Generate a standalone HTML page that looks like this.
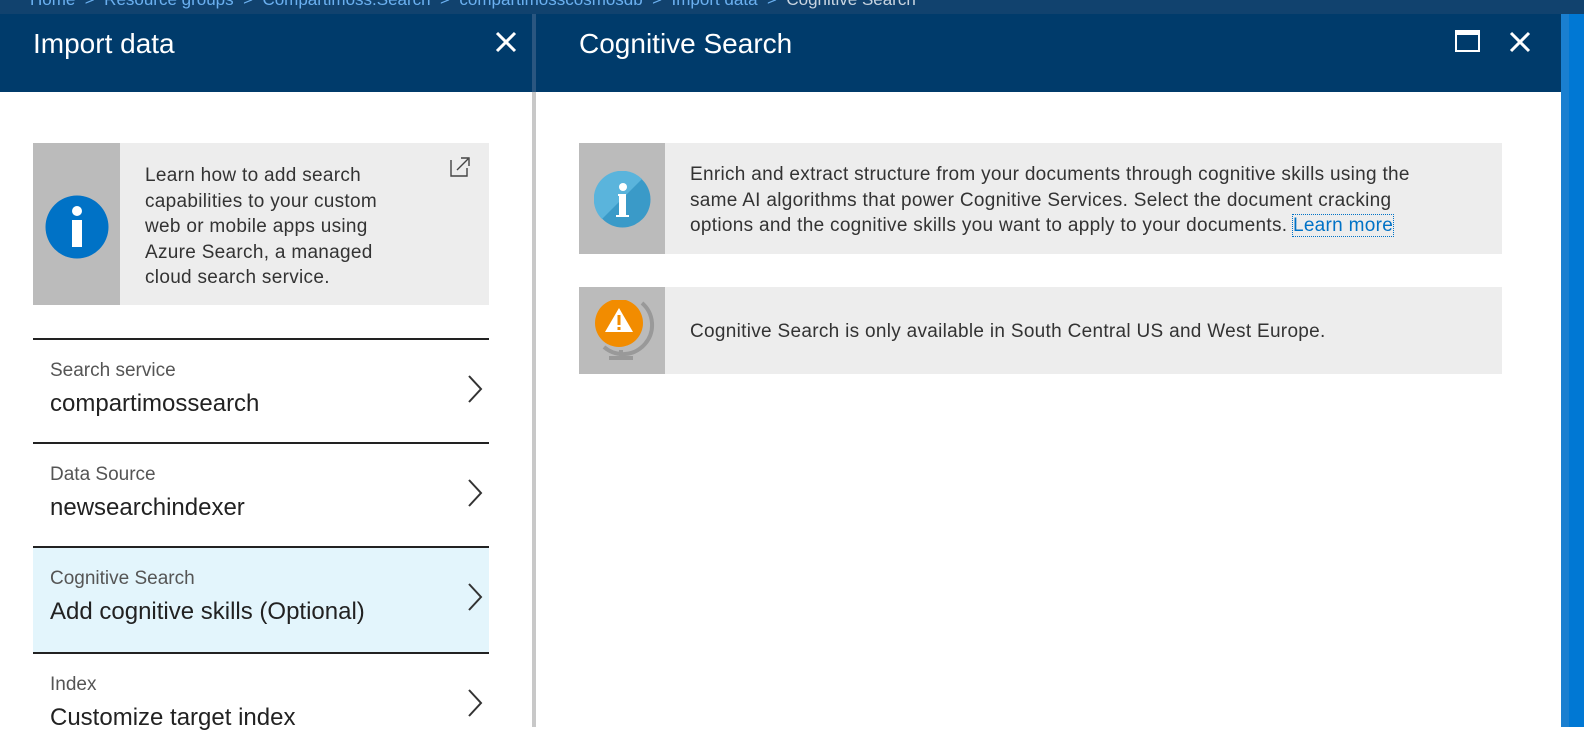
<!DOCTYPE html>
<html><head><meta charset="utf-8"><style>
*{margin:0;padding:0;box-sizing:border-box}
body{width:1584px;height:727px;overflow:hidden;background:#fff;font-family:"Liberation Sans",sans-serif;position:relative}
.abs{position:absolute}
.bc{left:0;top:0;width:1584px;height:14px;background:#11426e;overflow:hidden}
.bc span{position:absolute;top:-10px;font-size:17px;color:#6bb0f0;white-space:nowrap}
.hdr{top:14px;height:78px;background:#003b6b}
.t{color:#fff;font-size:28px;top:28px}
.item{left:33px;width:456px;border-top:2px solid #222}
.item .l{position:absolute;left:17px;top:20px;font-size:19px;color:#555}
.item .v{position:absolute;left:17px;top:50px;font-size:24px;color:#222}
.chev{position:absolute;right:6px;top:34px}
.txt{font-size:19px;color:#333;line-height:25.5px;letter-spacing:0.3px}
</style></head><body>
<div class="abs bc">
<span style="left:30px">Home &nbsp;&gt;&nbsp; Resource groups &nbsp;&gt;&nbsp; Compartimoss.Search &nbsp;&gt;&nbsp; compartimosscosmosdb &nbsp;&gt;&nbsp; Import data &nbsp;&gt;&nbsp; <span style="position:static;color:#c8d4e0">Cognitive Search</span></span>
</div>
<div class="abs hdr" style="left:0;width:532px"></div>
<div class="abs hdr" style="left:536px;width:1025px"></div>
<div class="abs" style="left:532px;top:14px;width:4px;height:78px;background:#2a5680"></div>
<div class="abs" style="left:532px;top:92px;width:4px;height:635px;background:#c8c8c8"></div>
<div class="abs" style="left:1561px;top:14px;width:23px;height:713px;background:#0078d4"></div>
<div class="abs" style="left:1561px;top:14px;width:8px;height:713px;background:#1a7fd0"></div>
<div class="abs t" style="left:33px">Import data</div>
<div class="abs t" style="left:579px">Cognitive Search</div>
<svg class="abs" style="left:494px;top:30px" width="24" height="24"><path d="M3 3L21 21M21 3L3 21" stroke="#fff" stroke-width="3"/></svg>
<svg class="abs" style="left:1508px;top:30px" width="24" height="24"><path d="M3 3L21 21M21 3L3 21" stroke="#fff" stroke-width="3"/></svg>
<div class="abs" style="left:1455px;top:30px;width:25px;height:22px;border:2px solid #fff;border-top-width:5px"></div>

<div class="abs" style="left:33px;top:143px;width:456px;height:162px;background:#ededed"></div>
<div class="abs" style="left:33px;top:143px;width:87px;height:162px;background:#bbb"></div>
<svg class="abs" style="left:45px;top:195px" width="64" height="64"><circle cx="32" cy="32" r="31.5" fill="#0072c6"/><circle cx="32" cy="16" r="5" fill="#fff"/><rect x="27" y="25" width="10" height="27" fill="#fff"/></svg>
<svg class="abs" style="left:450px;top:157px" width="20" height="20"><path d="M1 3V19H17V11M7 13L18 2M11 1H19V9" fill="none" stroke="#444" stroke-width="1.4"/></svg>
<div class="abs txt" style="left:145px;top:163px;width:255px">Learn how to add search capabilities to your custom web or mobile apps using Azure Search, a managed cloud search service.</div>

<div class="abs item" style="top:338px;height:106px"><div class="l">Search service</div><div class="v">compartimossearch</div><svg class="chev" width="16" height="30"><path d="M2 2L14 15L2 28" fill="none" stroke="#333" stroke-width="2"/></svg></div>
<div class="abs item" style="top:442px;height:106px"><div class="l">Data Source</div><div class="v">newsearchindexer</div><svg class="chev" width="16" height="30"><path d="M2 2L14 15L2 28" fill="none" stroke="#333" stroke-width="2"/></svg></div>
<div class="abs item" style="top:546px;height:108px;background:#e3f5fc"><div class="l">Cognitive Search</div><div class="v">Add cognitive skills (Optional)</div><svg class="chev" width="16" height="30"><path d="M2 2L14 15L2 28" fill="none" stroke="#333" stroke-width="2"/></svg></div>
<div class="abs item" style="top:652px;height:80px"><div class="l">Index</div><div class="v">Customize target index</div><svg class="chev" width="16" height="30"><path d="M2 2L14 15L2 28" fill="none" stroke="#333" stroke-width="2"/></svg></div>

<div class="abs" style="left:579px;top:143px;width:923px;height:111px;background:#ededed"></div>
<div class="abs" style="left:579px;top:143px;width:86px;height:111px;background:#bbb"></div>
<svg class="abs" style="left:594px;top:171px" width="57" height="57"><circle cx="28.5" cy="28.5" r="28" fill="#3a9ac8"/><path d="M8 48A28 28 0 0 1 48 8Z" fill="#5ab4dc"/><circle cx="29" cy="16" r="4" fill="#fff"/><path d="M24 23H32V44H35V46H22V44H25V25H24Z" fill="#fff"/></svg>
<div class="abs txt" style="left:690px;top:162px;width:760px">Enrich and extract structure from your documents through cognitive skills using the same AI algorithms that power Cognitive Services. Select the document cracking options and the cognitive skills you want to apply to your documents. <span style="color:#0072c6;outline:1px dotted #0072c6">Learn more</span></div>

<div class="abs" style="left:579px;top:287px;width:923px;height:87px;background:#ededed"></div>
<div class="abs" style="left:579px;top:287px;width:86px;height:87px;background:#bbb"></div>
<svg class="abs" style="left:590px;top:300px" width="70" height="66"><path d="M52 3A27 27 0 0 1 14 47" fill="none" stroke="#999" stroke-width="4"/><rect x="29" y="50" width="4" height="6" fill="#999"/><rect x="19" y="56" width="24" height="4" fill="#999"/><circle cx="29" cy="23" r="24" fill="#f28c00"/><path d="M29 8L43 32H15Z" fill="#fff"/><rect x="27.5" y="15" width="3" height="10" fill="#f28c00"/><rect x="27.5" y="27" width="3" height="3" fill="#f28c00"/></svg>
<div class="abs txt" style="left:690px;top:319px">Cognitive Search is only available in South Central US and West Europe.</div>
</body></html>
